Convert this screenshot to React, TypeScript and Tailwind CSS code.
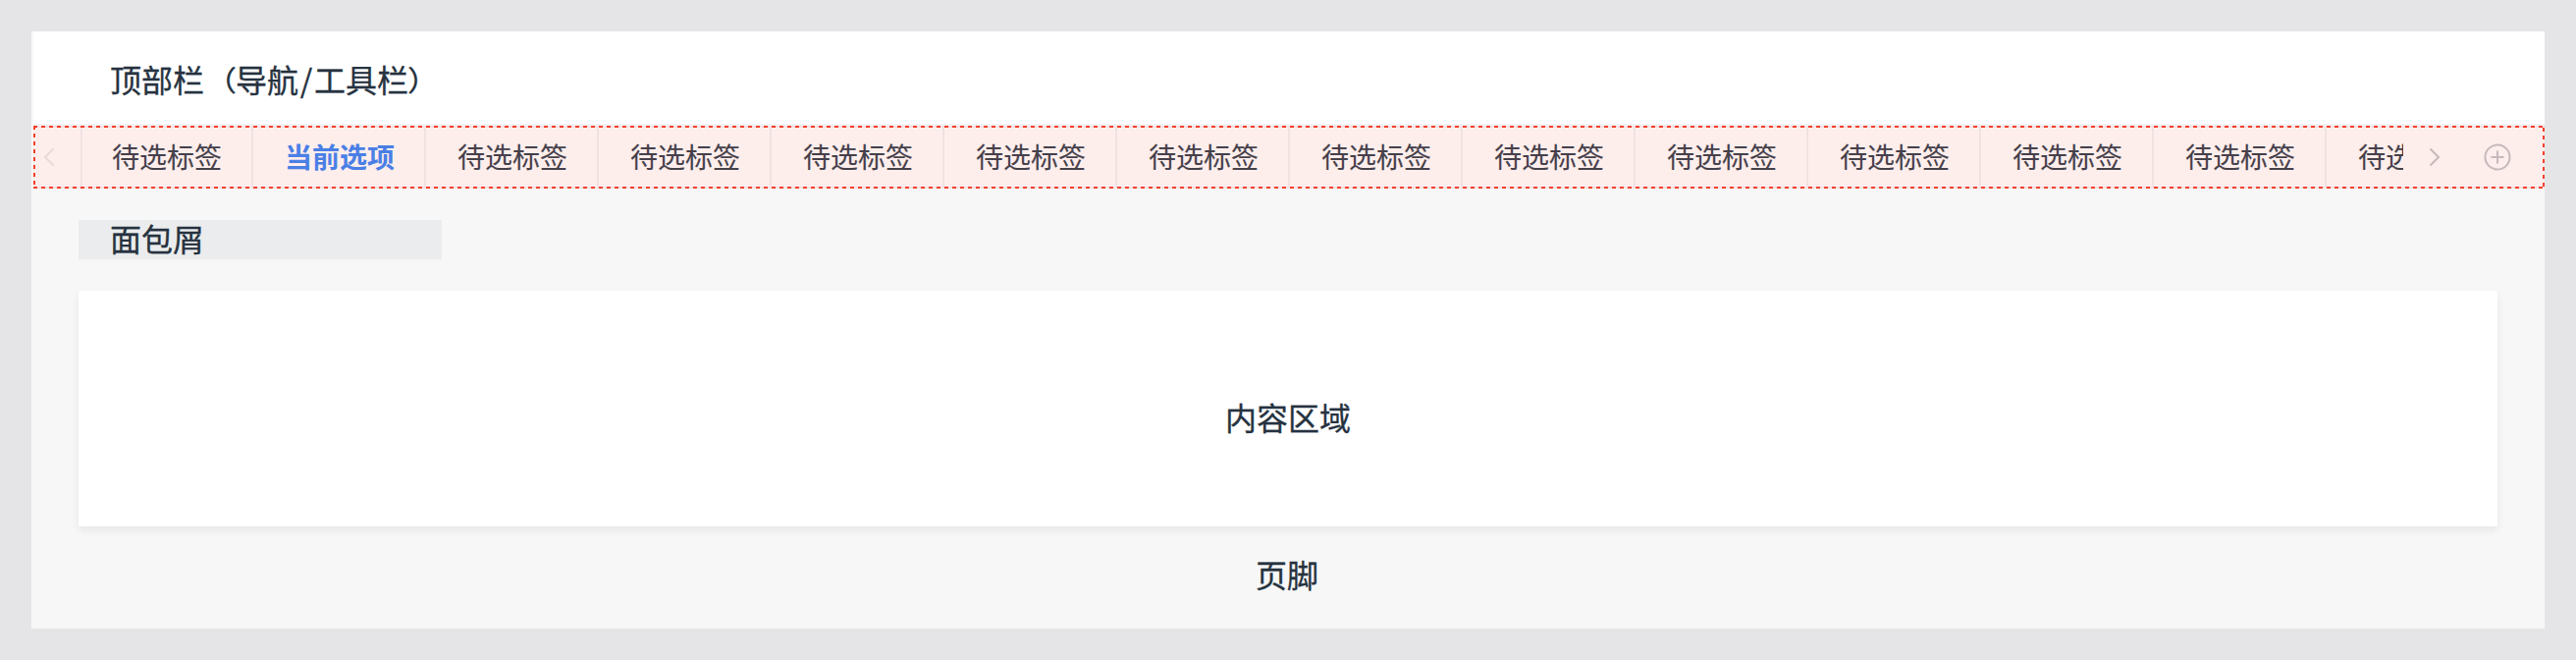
const tabs = Array.from({ length: 14 }, (_, i) => (i === 1 ? "当前选项" : "待选标签"));

export default function App() {
  return (
    <div className="h-[672px] w-[2624px] overflow-hidden bg-[#e5e5e7] p-8 font-['Noto_Sans_CJK_SC',sans-serif] text-[32px] leading-10 text-[#263240] [-webkit-text-stroke:0.3px]">
      <div className="flex h-[608px] w-[2560px] flex-col bg-[#f7f7f7]">
        <header className="ml-0.5 flex h-24 items-center border-b-2 border-[#f3f3f4] bg-white pl-[78px] whitespace-nowrap">
          <span className="pt-0.5">
            顶部栏<span className="inline-block translate-x-px scale-y-90">（</span>导航
            <span className="inline-block w-4 text-center">/</span>工具栏
            <span className="inline-block -translate-x-px scale-y-90">）</span>
          </span>
        </header>

        <nav className="relative ml-0.5 flex h-16 shrink-0 items-stretch bg-[#fdeeec] text-[28px] text-[#46404a] [-webkit-text-stroke:0.1px]">
          <button className="flex w-12 items-center pl-2.5" aria-label="prev">
            <svg width="12" height="20" viewBox="0 0 12 20" fill="none" stroke="#e8dadb" strokeWidth="2">
              <path d="M10.5 1.5 2 10l8.5 8.5" />
            </svg>
          </button>
          <div className="flex w-[2366px] overflow-hidden border-l-2 border-[#f1e2e2]">
            {tabs.map((label, i) => (
              <div
                key={i}
                className={
                  "flex shrink-0 items-center border-r-2 border-[#f1e2e2] pb-0.5 whitespace-nowrap " +
                  (i === 0 ? "w-[174px] pl-[30px] " : "w-44 pl-8 ") +
                  (i === 1 ? "font-bold text-[#4a7fe6] [-webkit-text-stroke:0px]" : "")
                }
              >
                {label}
              </div>
            ))}
          </div>
          <button className="ml-[26px] flex w-14 items-center" aria-label="next">
            <svg width="12" height="20" viewBox="0 0 12 20" fill="none" stroke="#c6b9bb" strokeWidth="2">
              <path d="M1.5 1.5 10 10l-8.5 8.5" />
            </svg>
          </button>
          <button className="flex items-center" aria-label="add">
            <svg width="28" height="28" viewBox="0 0 28 28" fill="none" stroke="#c6b9bb" strokeWidth="2">
              <circle cx="14" cy="14" r="12.5" />
              <path d="M14 7.5v13M7.5 14h13" />
            </svg>
          </button>
          <svg className="pointer-events-none absolute inset-0" width="2558" height="64" strokeWidth="2">
            <path d="M0 1H2558M0 63H2558" stroke="#f2e2e4" />
            <path d="M0 1H2558M0 63H2558M1 0V64M2557 2V64" stroke="#f43f2e" strokeDasharray="4 4" />
          </svg>
        </nav>

        <div className="mt-8 ml-12 flex h-10 w-[370px] shrink-0 items-center bg-[#ebeced] pb-1 pl-8">面包屑</div>

        <main className="mx-12 mt-8 flex h-60 w-[2464px] shrink-0 items-center justify-center bg-white pt-4 shadow-[0_4px_8px_rgba(30,35,70,0.08)]">
          内容区域
        </main>

        <footer className="flex h-[104px] items-center justify-center pr-0.5 pb-2">页脚</footer>
      </div>
    </div>
  );
}
